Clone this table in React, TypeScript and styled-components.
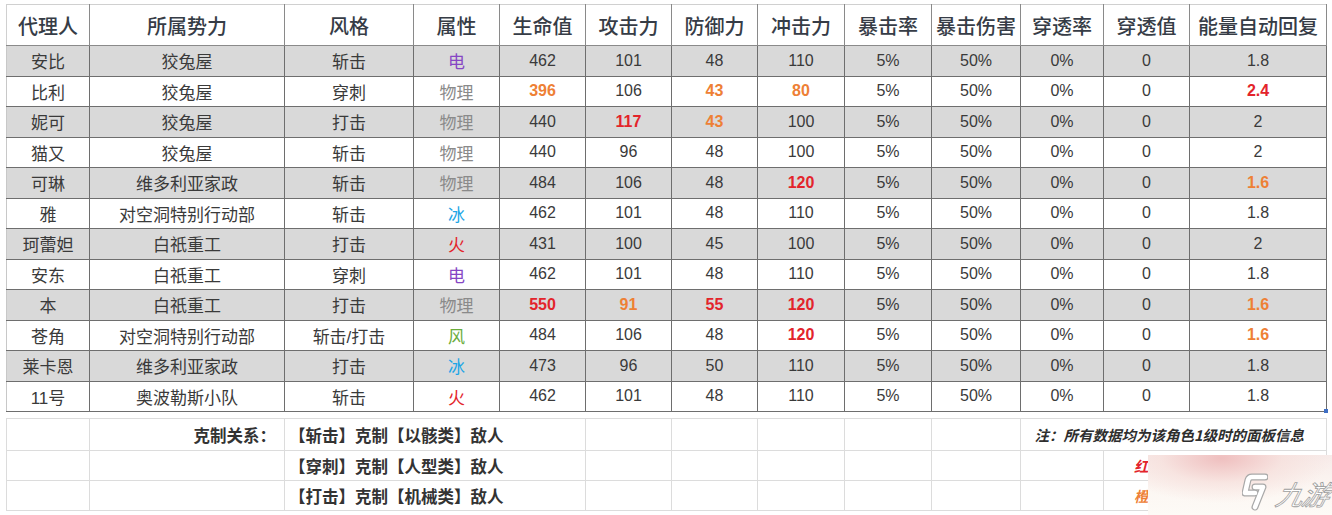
import React from 'react';
import styled, { createGlobalStyle } from 'styled-components';

// Types
type Tone = 'red' | 'orange';
type Element = '电' | '物理' | '冰' | '火' | '风';

interface Stat {
  v: string;
  tone?: Tone;
}

interface Agent {
  name: string;
  faction: string;
  style: string;
  element: Element;
  hp: Stat;
  atk: Stat;
  def: Stat;
  impact: Stat;
  energy: Stat;
}

// Data
const s = (v: string | number, tone?: Tone): Stat => ({ v: String(v), tone });

const AGENTS: Agent[] = [
  { name: '安比', faction: '狡兔屋', style: '斩击', element: '电', hp: s(462), atk: s(101), def: s(48), impact: s(110), energy: s('1.8') },
  { name: '比利', faction: '狡兔屋', style: '穿刺', element: '物理', hp: s(396, 'orange'), atk: s(106), def: s(43, 'orange'), impact: s(80, 'orange'), energy: s('2.4', 'red') },
  { name: '妮可', faction: '狡兔屋', style: '打击', element: '物理', hp: s(440), atk: s(117, 'red'), def: s(43, 'orange'), impact: s(100), energy: s('2') },
  { name: '猫又', faction: '狡兔屋', style: '斩击', element: '物理', hp: s(440), atk: s(96), def: s(48), impact: s(100), energy: s('2') },
  { name: '可琳', faction: '维多利亚家政', style: '斩击', element: '物理', hp: s(484), atk: s(106), def: s(48), impact: s(120, 'red'), energy: s('1.6', 'orange') },
  { name: '雅', faction: '对空洞特别行动部', style: '斩击', element: '冰', hp: s(462), atk: s(101), def: s(48), impact: s(110), energy: s('1.8') },
  { name: '珂蕾妲', faction: '白祇重工', style: '打击', element: '火', hp: s(431), atk: s(100), def: s(45), impact: s(100), energy: s('2') },
  { name: '安东', faction: '白祇重工', style: '穿刺', element: '电', hp: s(462), atk: s(101), def: s(48), impact: s(110), energy: s('1.8') },
  { name: '本', faction: '白祇重工', style: '打击', element: '物理', hp: s(550, 'red'), atk: s(91, 'orange'), def: s(55, 'red'), impact: s(120, 'red'), energy: s('1.6', 'orange') },
  { name: '苍角', faction: '对空洞特别行动部', style: '斩击/打击', element: '风', hp: s(484), atk: s(106), def: s(48), impact: s(120, 'red'), energy: s('1.6', 'orange') },
  { name: '莱卡恩', faction: '维多利亚家政', style: '打击', element: '冰', hp: s(473), atk: s(96), def: s(50), impact: s(110), energy: s('1.8') },
  { name: '11号', faction: '奥波勒斯小队', style: '斩击', element: '火', hp: s(462), atk: s(101), def: s(48), impact: s(110), energy: s('1.8') },
];

const HEADERS = ['代理人', '所属势力', '风格', '属性', '生命值', '攻击力', '防御力', '冲击力', '暴击率', '暴击伤害', '穿透率', '穿透值', '能量自动回复'];
const COL_WIDTHS = [83, 195, 129, 86, 86, 86, 86, 87, 87, 89, 83, 86, 137];

const ELEMENT_COLORS: Record<Element, string> = {
  电: '#8646c4',
  物理: '#8a8a8a',
  冰: '#1ea6e6',
  火: '#e3242b',
  风: '#6aac3c',
};

const TONE_COLORS: Record<Tone, string> = {
  red: '#e3242b',
  orange: '#ee8035',
};

const COUNTERS = [
  '【斩击】克制【以骸类】敌人',
  '【穿刺】克制【人型类】敌人',
  '【打击】克制【机械类】敌人',
];

// Styled components
const GlobalStyle = createGlobalStyle`
  body {
    margin: 0;
    background: #ffffff;
    font-family: 'Liberation Sans', 'Noto Sans CJK SC', sans-serif;
    color: #3a3a3a;
  }
`;

const Page = styled.div`
  position: relative;
  width: 1332px;
  height: 515px;
  padding: 4px 0 0 6px;
  box-sizing: border-box;
  overflow: hidden;
`;

const Sheet = styled.table`
  width: 1320px;
  table-layout: fixed;
  border-collapse: collapse;
`;

const HeadCell = styled.th`
  height: 40px;
  padding: 0;
  font-size: 20px;
  font-weight: 500;
  color: #363c46;
  text-align: center;
  white-space: nowrap;
  border: 1px solid #8a8a8a;
  border-top-color: #d0d0d0;
  &:first-child {
    border-left-color: #d0d0d0;
  }
`;

const Row = styled.tr<{ $shade: boolean }>`
  height: 30.5px;
  background: ${p => (p.$shade ? '#d9d9d9' : '#ffffff')};
`;

const Cell = styled.td<{ $tone?: Tone; $color?: string }>`
  position: relative;
  padding: 0;
  font-size: 16px;
  font-weight: ${p => (p.$tone ? 700 : 400)};
  color: ${p => (p.$tone ? TONE_COLORS[p.$tone] : p.$color || '#3a3a3a')};
  text-align: center;
  white-space: nowrap;
  border: 1px solid #6e6e6e;
  &:first-child {
    border-left-color: #c8c8c8;
  }
`;

const TextCell = styled(Cell)`
  font-size: 17px;
`;

const FillHandle = styled.span`
  position: absolute;
  right: -2px;
  bottom: -2px;
  width: 4px;
  height: 4px;
  background: #3f6fc4;
`;

const Notes = styled.table`
  width: 1320px;
  margin-top: 6px;
  table-layout: fixed;
  border-collapse: collapse;
`;

const NoteRow = styled.tr<{ $tall?: boolean }>`
  height: ${p => (p.$tall ? 32 : 30)}px;
`;

const NoteCell = styled.td<{ $align?: 'left' | 'right' }>`
  padding: 0 ${p => (p.$align === 'right' ? '8px' : '0')} 0 ${p => (p.$align === 'left' ? '4px' : '0')};
  font-family: 'Noto Sans CJK SC', sans-serif;
  font-size: 16.5px;
  font-weight: 700;
  color: #333333;
  text-align: ${p => p.$align || 'left'};
  white-space: nowrap;
  border: 1px solid #dcdcdc;
`;

const Remark = styled.td<{ $color?: string; $align?: 'left' | 'right' }>`
  padding: ${p => (p.$align === 'right' ? '0 22px 0 0' : '0 0 0 30px')};
  font-family: 'Noto Sans CJK SC', sans-serif;
  font-size: 14.5px;
  font-weight: 700;
  font-style: italic;
  color: ${p => p.$color || '#2e2e2e'};
  text-align: ${p => p.$align || 'left'};
  white-space: nowrap;
  overflow: visible;
  border: 1px solid #dcdcdc;
`;

const Watermark = styled.div`
  position: absolute;
  right: 0;
  bottom: 0;
  width: 184px;
  height: 60px;
  display: flex;
  align-items: flex-end;
  gap: 9px;
  padding: 0 0 6px 94px;
  box-sizing: border-box;
  background:
    radial-gradient(ellipse 60% 75% at 40% 5%, rgba(238, 186, 186, 0.9), rgba(246, 220, 216, 0.6) 55%, rgba(255, 255, 255, 0) 100%),
    linear-gradient(180deg, #f7ebe9 0%, #fcf7f3 60%, #fdfaf6 100%);
`;

const LogoMark = styled.svg`
  flex: none;
  margin-bottom: -2px;
`;

const LogoText = styled.span`
  font-family: 'Noto Sans CJK SC', sans-serif;
  font-size: 27px;
  font-weight: 400;
  font-style: italic;
  letter-spacing: -1px;
  line-height: 1;
  color: #ffffff;
  -webkit-text-stroke: 0.8px #9e9e9e;
  transform: skewX(-14deg);
  margin-bottom: 2px;
`;

const StatCell: React.FC<{ stat: Stat; handle?: boolean }> = ({ stat, handle }) => (
  <Cell $tone={stat.tone}>
    {stat.v}
    {handle && <FillHandle />}
  </Cell>
);

const App: React.FC = () => {
  const last = AGENTS.length - 1;

  return (
    <Page>
      <GlobalStyle />
      <Sheet>
        <colgroup>
          {COL_WIDTHS.map((w, i) => (
            <col key={i} style={{ width: w }} />
          ))}
        </colgroup>
        <thead>
          <tr>
            {HEADERS.map(h => (
              <HeadCell key={h}>{h}</HeadCell>
            ))}
          </tr>
        </thead>
        <tbody>
          {AGENTS.map((a, i) => (
            <Row key={a.name} $shade={i % 2 === 0}>
              <TextCell>{a.name}</TextCell>
              <TextCell>{a.faction}</TextCell>
              <TextCell>{a.style}</TextCell>
              <TextCell $color={ELEMENT_COLORS[a.element]}>{a.element}</TextCell>
              <StatCell stat={a.hp} />
              <StatCell stat={a.atk} />
              <StatCell stat={a.def} />
              <StatCell stat={a.impact} />
              <Cell>5%</Cell>
              <Cell>50%</Cell>
              <Cell>0%</Cell>
              <Cell>0</Cell>
              <StatCell stat={a.energy} handle={i === last} />
            </Row>
          ))}
        </tbody>
      </Sheet>

      <Notes>
        <colgroup>
          {COL_WIDTHS.map((w, i) => (
            <col key={i} style={{ width: w }} />
          ))}
        </colgroup>
        <tbody>
          {COUNTERS.map((c, i) => (
            <NoteRow key={c} $tall={i === 0}>
              <NoteCell />
              <NoteCell $align="right">{i === 0 ? '克制关系：' : ''}</NoteCell>
              <NoteCell colSpan={3} $align="left">{c}</NoteCell>
              <NoteCell />
              <NoteCell />
              <NoteCell />
              <NoteCell />
              <NoteCell />
              {i === 0 ? (
                <Remark colSpan={3} $align="right">注：所有数据均为该角色1级时的面板信息</Remark>
              ) : (
                <>
                  <NoteCell />
                  <Remark colSpan={2} $color={i === 1 ? '#e3242b' : '#ee8035'}>
                    {i === 1 ? '红色为同类最高值' : '橙色为同类次高值'}
                  </Remark>
                </>
              )}
            </NoteRow>
          ))}
        </tbody>
      </Notes>

      <Watermark>
        <LogoMark width="26" height="38" viewBox="0 0 26 38">
          <g fill="none" strokeLinecap="round" strokeLinejoin="round">
            <path d="M23 4 L10 4 Q7 4 6 7 L3 20 L13 20" stroke="#a8a8a8" strokeWidth="7" />
            <path d="M13 14 L21 14 L13 34" stroke="#a8a8a8" strokeWidth="7" />
            <path d="M23 4 L10 4 Q7 4 6 7 L3 20 L13 20" stroke="#ffffff" strokeWidth="4.6" />
            <path d="M13 14 L21 14 L13 34" stroke="#ffffff" strokeWidth="4.6" />
          </g>
        </LogoMark>
        <LogoText>九游</LogoText>
      </Watermark>
    </Page>
  );
};

export default App;
